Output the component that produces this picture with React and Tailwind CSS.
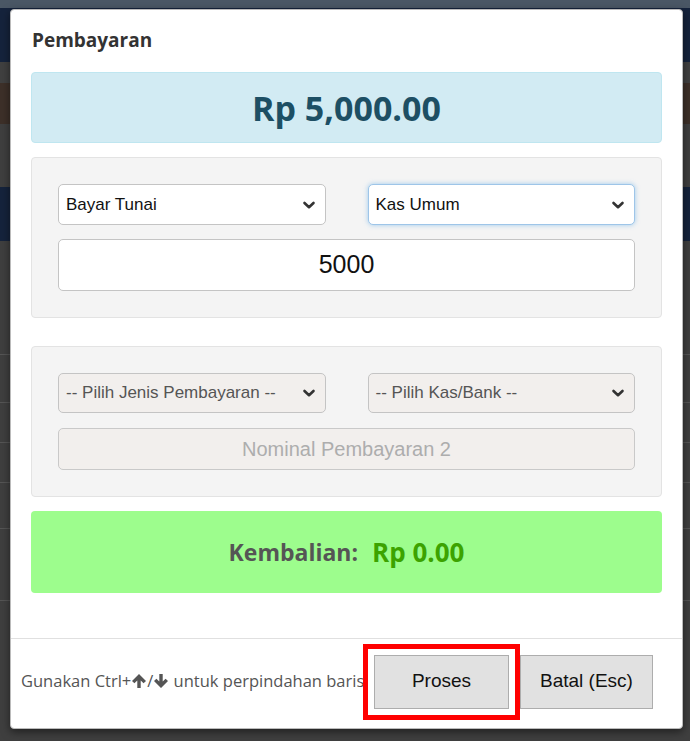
const Chevron = () => (
  <svg width="14" height="10" viewBox="0 0 14 10" className="shrink-0">
    <path d="M2.5 3 L7 7.2 L11.5 3" fill="none" stroke="#333" strokeWidth="2.6" strokeLinecap="round" strokeLinejoin="round" />
  </svg>
);

const ArrowUp = () => (
  <svg width="16" height="16" viewBox="0 0 16 16" className="inline-block align-[-2px]">
    <path d="M8 1 L15 8 L12.6 10.3 L9.7 7.4 L9.7 15 L6.3 15 L6.3 7.4 L3.4 10.3 L1 8 Z" fill="#555" />
  </svg>
);

const ArrowDown = () => (
  <svg width="16" height="16" viewBox="0 0 16 16" className="inline-block align-[-2px]">
    <path d="M8 15 L15 8 L12.6 5.7 L9.7 8.6 L9.7 1 L6.3 1 L6.3 8.6 L3.4 5.7 L1 8 Z" fill="#555" />
  </svg>
);

const SelectBox = ({ label, focused, muted }) => (
  <div
    className={`flex h-full items-center justify-between rounded-[5px] border pl-[7px] pr-[9px] text-[17px] ${
      focused
        ? 'border-[#9ec5e8] bg-white text-[#111] shadow-[0_0_5px_rgba(102,175,233,0.6)]'
        : muted
        ? 'border-[#c4c4c4] bg-[#f2efed] text-[#555]'
        : 'border-[#c4c4c4] bg-white text-[#111]'
    }`}
  >
    <span>{label}</span>
    <Chevron />
  </div>
);

const Backdrop = () => (
  <div className="flex h-full flex-col bg-[#3f3f3f]">
    <div className="h-[8px] bg-[#4a5765]" />
    <div className="h-[54px] bg-[#15233c]" />
    <div className="h-[21px] bg-[#404040]" />
    <div className="h-[41px] bg-[#3d3029]" />
    <div className="h-[63px] bg-[#3f3f3f]" />
    <div className="h-[54px] bg-[#15233c]" />
    <div className="h-[114px] border-b border-[#555] bg-[#3f3f3f]" />
    <div className="h-[48px] border-b border-[#555] bg-[#3f3f3f]" />
    <div className="h-[40px] border-b border-[#555] bg-[#3f3f3f]" />
    <div className="h-[40px] border-b border-[#555] bg-[#3f3f3f]" />
    <div className="h-[46px] border-b border-[#555] bg-[#3f3f3f]" />
    <div className="h-[72px] border-b border-[#555] bg-[#3f3f3f]" />
    <div className="flex-1 bg-[#3f3f3f]" />
  </div>
);

export default function App() {
  return (
    <div className="relative h-[741px] w-[690px] overflow-hidden font-['Open_Sans',sans-serif]">
      <Backdrop />

      <div className="absolute left-[10px] top-[9px] flex h-[720px] w-[673px] flex-col rounded-[4px] border border-[#bbb] bg-white shadow-[0_3px_9px_rgba(0,0,0,0.5)]">
        {/* header */}
        <div className="px-[21px] pt-[17px] pb-[19px]">
          <h4 className="text-[19px] font-bold leading-[26px] text-[#333]">Pembayaran</h4>
        </div>

        {/* body */}
        <div className="flex flex-col px-[20px]">
          <div className="flex h-[71px] items-center justify-center rounded-[4px] border border-[#bfe6f0] bg-[#d2ebf3]">
            <span className="text-[34px] font-bold leading-none text-[#1d4f64]">Rp 5,000.00</span>
          </div>

          <div className="mt-[14px] flex h-[161px] flex-col gap-[14px] rounded-[4px] border border-[#e3e3e3] bg-[#f4f4f4] px-[26px] pt-[26px] font-['Liberation_Sans',Arial,sans-serif]">
            <div className="grid h-[41px] grid-cols-2 gap-[42px]">
              <SelectBox label="Bayar Tunai" />
              <SelectBox label="Kas Umum" focused />
            </div>
            <div className="flex h-[52px] items-center justify-center rounded-[5px] border border-[#c4c4c4] bg-white text-[25px] text-[#111]">
              5000
            </div>
          </div>

          <div className="mt-[28px] flex h-[151px] flex-col gap-[15px] rounded-[4px] border border-[#e3e3e3] bg-[#f4f4f4] px-[26px] pt-[26px] font-['Liberation_Sans',Arial,sans-serif]">
            <div className="grid h-[40px] grid-cols-2 gap-[42px]">
              <SelectBox label="-- Pilih Jenis Pembayaran --" muted />
              <SelectBox label="-- Pilih Kas/Bank --" muted />
            </div>
            <div className="flex h-[42px] items-center justify-center rounded-[5px] border border-[#c9c9c9] bg-[#f2efed] text-[20px] text-[#adadad]">
              Nominal Pembayaran 2
            </div>
          </div>

          <div className="mt-[14px] flex h-[82px] items-center justify-center gap-[14px] rounded-[4px] bg-[#9dfd8d]">
            <span className="text-[23px] font-bold text-[#555]">Kembalian:</span>
            <span className="text-[26px] font-bold text-[#3ca300]">Rp 0.00</span>
          </div>
        </div>

        {/* footer */}
        <div className="mt-auto flex h-[90px] items-center border-t border-[#e0e0e0] pb-[4px] pl-[10px] pr-[29px]">
          <div className="min-w-0 flex-1 whitespace-nowrap text-[16.5px] text-[#555]">
            Gunakan Ctrl+<ArrowUp />/<ArrowDown /> untuk perpindahan baris
          </div>
          <div className="flex items-center">
            <div className="border-[5px] border-[#ff0000] p-[6px]">
              <button className="h-[54px] w-[135px] border border-[#adadad] bg-[#e1e1e1] font-['Liberation_Sans',Arial,sans-serif] text-[19px] text-[#111]">
                Proses
              </button>
            </div>
            <button className="h-[54px] w-[133px] border border-[#adadad] bg-[#e1e1e1] font-['Liberation_Sans',Arial,sans-serif] text-[19px] text-[#111]">
              Batal (Esc)
            </button>
          </div>
        </div>
      </div>
    </div>
  );
}
